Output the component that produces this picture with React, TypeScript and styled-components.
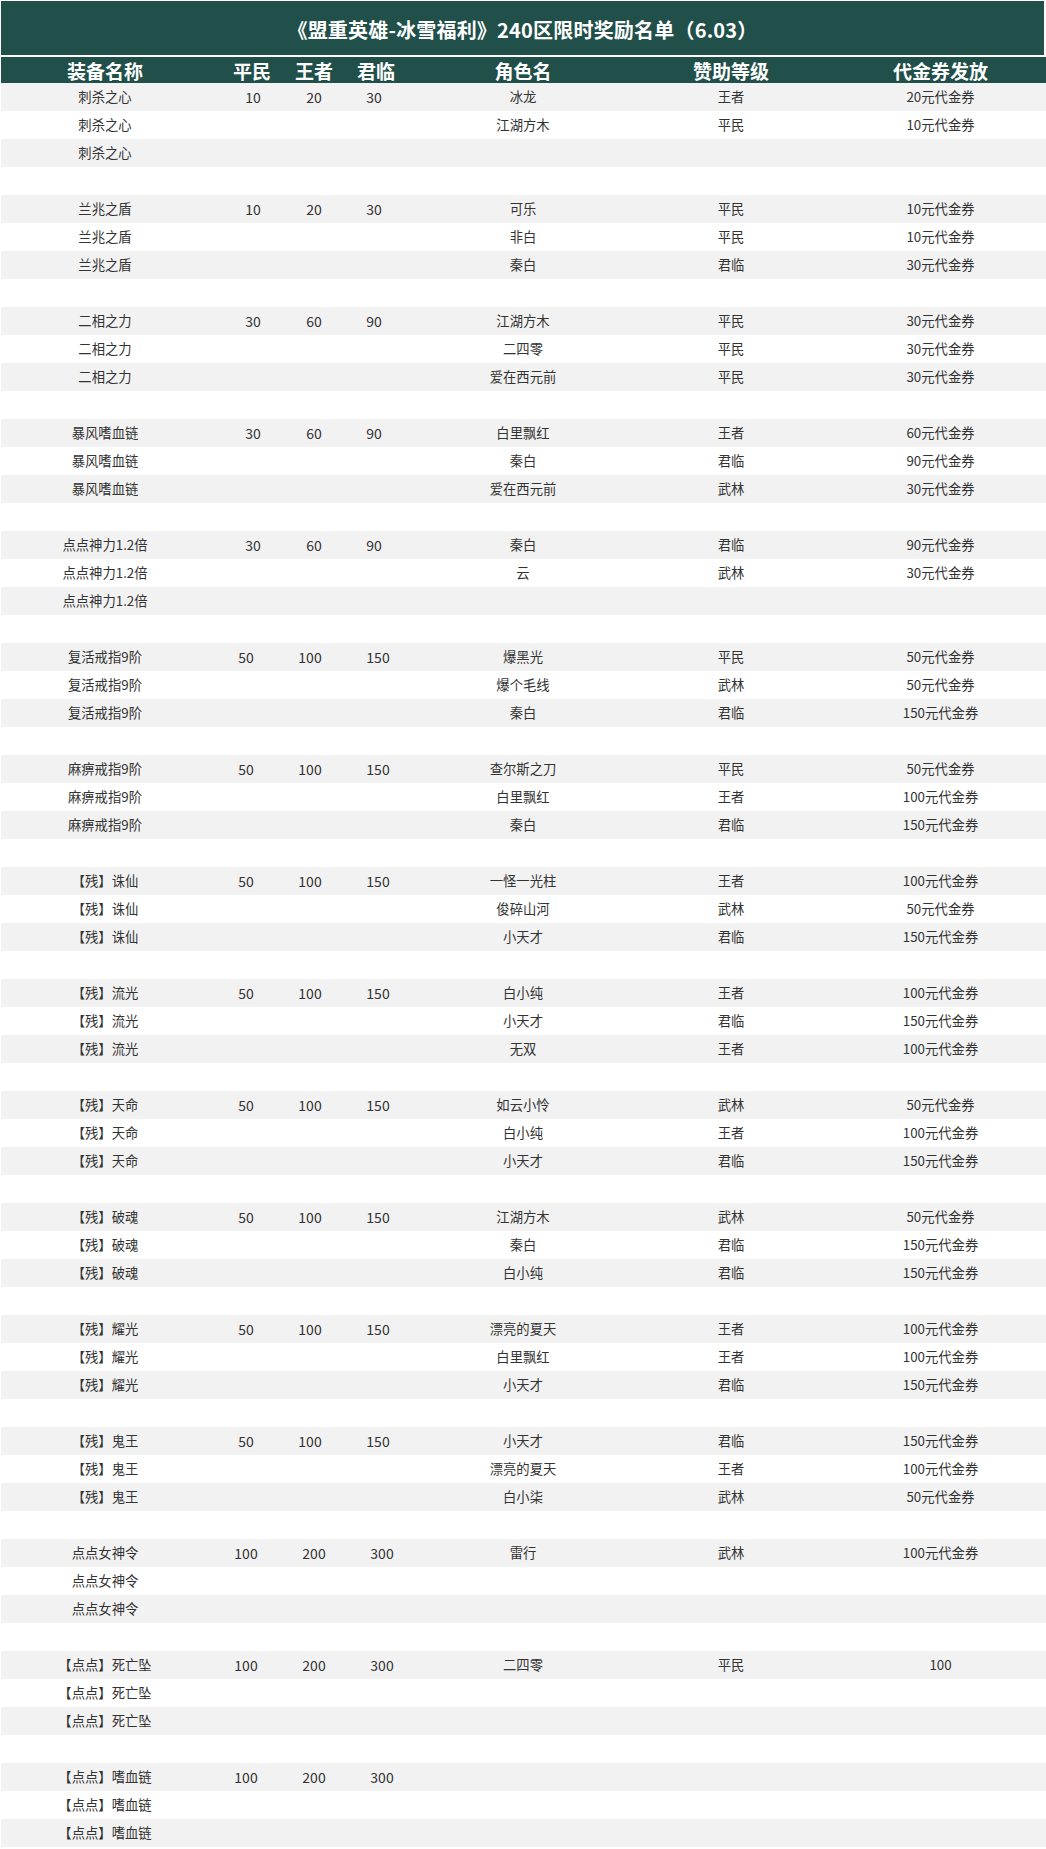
import React from "react";
import styled, { createGlobalStyle } from "styled-components";

const GREEN = "#214f4a";

const GlobalStyle = createGlobalStyle`
  html, body {
    margin: 0;
    padding: 0;
    background: #ffffff;
  }
  body {
    font-family: "Microsoft YaHei", "Noto Sans CJK SC", "Noto Sans", sans-serif;
  }
`;

const Page = styled.div`
  width: 1046px;
  box-sizing: border-box;
  padding: 1px 0 0 1px;
`;

const Title = styled.div`
  height: 54px;
  margin-right: 2px;
  margin-bottom: 2px;
  background: ${GREEN};
  color: #ffffff;
  display: flex;
  align-items: center;
  justify-content: center;
  font-size: 20px;
  font-weight: 700;
  letter-spacing: 0.2px;
  padding-top: 2px;
  box-sizing: border-box;
`;

const cols = "208px 86px 38px 86px 208px 208px 1fr";

const HeaderRow = styled.div`
  display: grid;
  grid-template-columns: ${cols};
  height: 26px;
  background: ${GREEN};
`;

const HeadCell = styled.div`
  display: flex;
  align-items: center;
  justify-content: center;
  color: #ffffff;
  font-size: 19px;
  font-weight: 700;
  line-height: 1;
  white-space: nowrap;
`;

const Row = styled.div<{ $striped: boolean }>`
  display: grid;
  grid-template-columns: ${cols};
  height: 28px;
  background: ${(p) => (p.$striped ? "#f2f2f2" : "#ffffff")};
`;

const Cell = styled.div`
  display: flex;
  align-items: center;
  justify-content: center;
  color: #333333;
  font-size: 13.33px;
  line-height: 1;
  white-space: nowrap;
`;

const NumCell = styled(Cell)<{ $shift: number }>`
  font-size: 14px;
  transform: translateX(${(p) => p.$shift}px);
`;

type Entry = [string, string, string];

interface Group {
  item: string;
  nums: [string, string, string];
  shift: [number, number, number];
  entries: Entry[];
}

const small: [number, number, number] = [1, 0, -2];
const mid: [number, number, number] = [-6, -4, 2];
const big: [number, number, number] = [-6, 0, 6];

const groups: Group[] = [
  {
    item: "刺杀之心",
    nums: ["10", "20", "30"],
    shift: small,
    entries: [
      ["冰龙", "王者", "20元代金券"],
      ["江湖方木", "平民", "10元代金券"],
    ],
  },
  {
    item: "兰兆之盾",
    nums: ["10", "20", "30"],
    shift: small,
    entries: [
      ["可乐", "平民", "10元代金券"],
      ["非白", "平民", "10元代金券"],
      ["秦白", "君临", "30元代金券"],
    ],
  },
  {
    item: "二相之力",
    nums: ["30", "60", "90"],
    shift: small,
    entries: [
      ["江湖方木", "平民", "30元代金券"],
      ["二四零", "平民", "30元代金券"],
      ["爱在西元前", "平民", "30元代金券"],
    ],
  },
  {
    item: "暴风嗜血链",
    nums: ["30", "60", "90"],
    shift: small,
    entries: [
      ["白里飘红", "王者", "60元代金券"],
      ["秦白", "君临", "90元代金券"],
      ["爱在西元前", "武林", "30元代金券"],
    ],
  },
  {
    item: "点点神力1.2倍",
    nums: ["30", "60", "90"],
    shift: small,
    entries: [
      ["秦白", "君临", "90元代金券"],
      ["云", "武林", "30元代金券"],
    ],
  },
  {
    item: "复活戒指9阶",
    nums: ["50", "100", "150"],
    shift: mid,
    entries: [
      ["爆黑光", "平民", "50元代金券"],
      ["爆个毛线", "武林", "50元代金券"],
      ["秦白", "君临", "150元代金券"],
    ],
  },
  {
    item: "麻痹戒指9阶",
    nums: ["50", "100", "150"],
    shift: mid,
    entries: [
      ["查尔斯之刀", "平民", "50元代金券"],
      ["白里飘红", "王者", "100元代金券"],
      ["秦白", "君临", "150元代金券"],
    ],
  },
  {
    item: "【残】诛仙",
    nums: ["50", "100", "150"],
    shift: mid,
    entries: [
      ["一怪一光柱", "王者", "100元代金券"],
      ["俊碎山河", "武林", "50元代金券"],
      ["小天才", "君临", "150元代金券"],
    ],
  },
  {
    item: "【残】流光",
    nums: ["50", "100", "150"],
    shift: mid,
    entries: [
      ["白小纯", "王者", "100元代金券"],
      ["小天才", "君临", "150元代金券"],
      ["无双", "王者", "100元代金券"],
    ],
  },
  {
    item: "【残】天命",
    nums: ["50", "100", "150"],
    shift: mid,
    entries: [
      ["如云小怜", "武林", "50元代金券"],
      ["白小纯", "王者", "100元代金券"],
      ["小天才", "君临", "150元代金券"],
    ],
  },
  {
    item: "【残】破魂",
    nums: ["50", "100", "150"],
    shift: mid,
    entries: [
      ["江湖方木", "武林", "50元代金券"],
      ["秦白", "君临", "150元代金券"],
      ["白小纯", "君临", "150元代金券"],
    ],
  },
  {
    item: "【残】耀光",
    nums: ["50", "100", "150"],
    shift: mid,
    entries: [
      ["漂亮的夏天", "王者", "100元代金券"],
      ["白里飘红", "王者", "100元代金券"],
      ["小天才", "君临", "150元代金券"],
    ],
  },
  {
    item: "【残】鬼王",
    nums: ["50", "100", "150"],
    shift: mid,
    entries: [
      ["小天才", "君临", "150元代金券"],
      ["漂亮的夏天", "王者", "100元代金券"],
      ["白小柒", "武林", "50元代金券"],
    ],
  },
  {
    item: "点点女神令",
    nums: ["100", "200", "300"],
    shift: big,
    entries: [["雷行", "武林", "100元代金券"]],
  },
  {
    item: "【点点】死亡坠",
    nums: ["100", "200", "300"],
    shift: big,
    entries: [["二四零", "平民", "100"]],
  },
  {
    item: "【点点】嗜血链",
    nums: ["100", "200", "300"],
    shift: big,
    entries: [],
  },
];

const headers = ["装备名称", "平民", "王者", "君临", "角色名", "赞助等级", "代金券发放"];

const App: React.FC = () => {
  let index = 0;
  const rows: React.ReactNode[] = [];

  groups.forEach((g, gi) => {
    for (let r = 0; r < 3; r++) {
      const e = g.entries[r] || ["", "", ""];
      rows.push(
        <Row key={`${gi}-${r}`} $striped={index % 2 === 0}>
          <Cell>{g.item}</Cell>
          {g.nums.map((n, i) => (
            <NumCell key={i} $shift={g.shift[i]}>
              {r === 0 ? n : ""}
            </NumCell>
          ))}
          <Cell>{e[0]}</Cell>
          <Cell>{e[1]}</Cell>
          <Cell>{e[2]}</Cell>
        </Row>
      );
      index++;
    }
    // blank line between groups
    if (gi < groups.length - 1) {
      rows.push(<Row key={`${gi}-gap`} $striped={index % 2 === 0} />);
      index++;
    }
  });

  return (
    <>
      <GlobalStyle />
      <Page>
        <Title>《盟重英雄-冰雪福利》240区限时奖励名单（6.03）</Title>
        <HeaderRow>
          {headers.map((h) => (
            <HeadCell key={h}>{h}</HeadCell>
          ))}
        </HeaderRow>
        {rows}
      </Page>
    </>
  );
};

export default App;
